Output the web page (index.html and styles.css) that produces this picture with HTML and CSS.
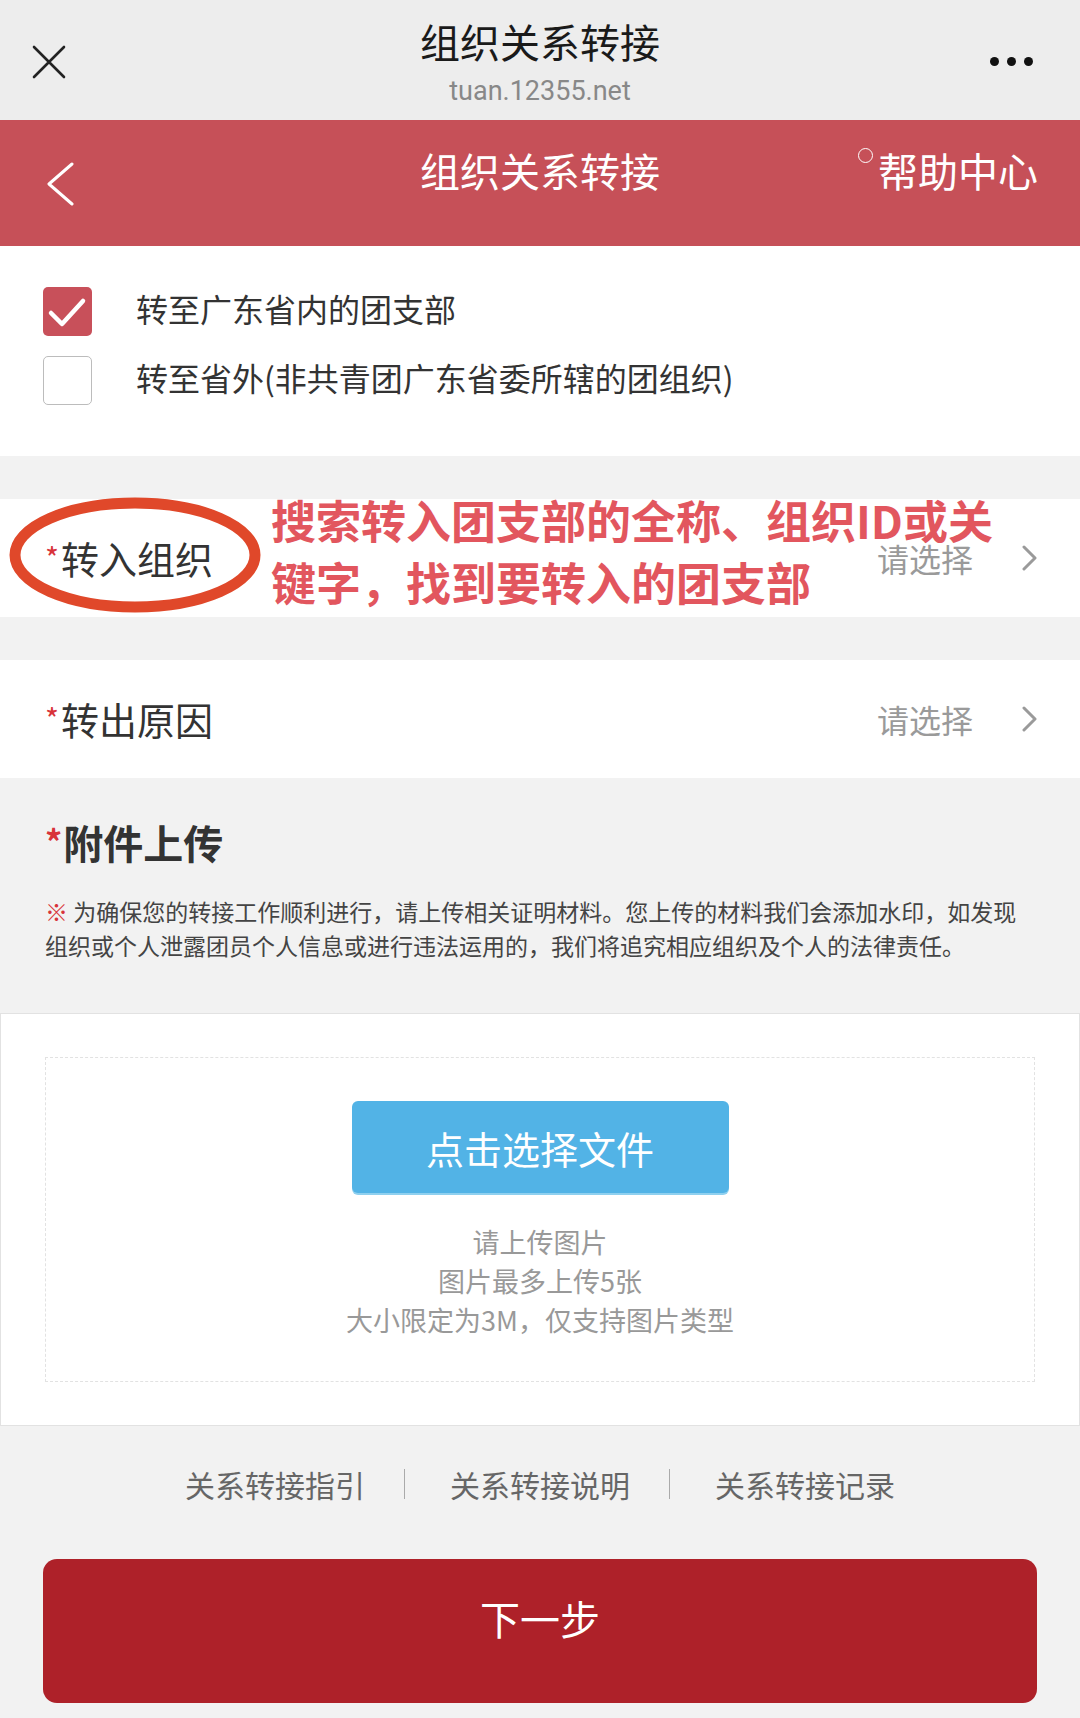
FILE: index.html
```html
<!DOCTYPE html>
<html lang="zh-CN">
<head>
    <meta charset="UTF-8">
    <meta name="viewport" content="width=device-width, initial-scale=1.0">
    <title>组织关系转接</title>
    <link rel="stylesheet" href="styles.css">
</head>
<body>
    <div class="wx-bar">
        <div class="wx-close">
            <svg width="34" height="34" viewBox="0 0 34 34"><path d="M2 2 L32 32 M32 2 L2 32" stroke="#222" stroke-width="2.6" stroke-linecap="round"/></svg>
        </div>
        <div class="wx-title">
            <div class="wx-name">组织关系转接</div>
            <div class="wx-url">tuan.12355.net</div>
        </div>
        <div class="wx-more">
            <span class="dot"></span><span class="dot"></span><span class="dot"></span>
        </div>
    </div>

    <div class="header">
        <div class="back">
            <svg width="28" height="44" viewBox="0 0 28 44"><polyline points="26,2 3,22 26,42" fill="none" stroke="#fff" stroke-width="3" stroke-linecap="round" stroke-linejoin="round"/></svg>
        </div>
        <div class="header-title">组织关系转接</div>
        <div class="help"><span class="help-dot"></span>帮助中心</div>
    </div>

    <div class="options">
        <div class="option">
            <span class="check checked">
                <svg width="49" height="49" viewBox="0 0 49 49"><polyline points="8,26 19,37 40,14" fill="none" stroke="#fff" stroke-width="4.5" stroke-linecap="round" stroke-linejoin="round"/></svg>
            </span>
            <span class="option-text">转至广东省内的团支部</span>
        </div>
        <div class="option">
            <span class="check"></span>
            <span class="option-text">转至省外(非共青团广东省委所辖的团组织)</span>
        </div>
    </div>

    <div class="field field-org">
        <div class="field-label"><span class="req">*</span>转入组织</div>
        <div class="field-value">
            请选择
            <svg width="15" height="26" viewBox="0 0 15 26"><polyline points="2,2 13,13 2,24" fill="none" stroke="#9a9a9a" stroke-width="3" stroke-linecap="round" stroke-linejoin="round"/></svg>
        </div>
        <svg class="mark-ring" width="256" height="118" viewBox="0 0 256 118"><ellipse cx="127" cy="58" rx="120" ry="52" fill="none" stroke="#e0482a" stroke-width="11"/></svg>
        <div class="mark-note">搜索转入团支部的全称、组织ID或关<br>键字，找到要转入的团支部</div>
    </div>

    <div class="field">
        <div class="field-label"><span class="req">*</span>转出原因</div>
        <div class="field-value">
            请选择
            <svg width="15" height="26" viewBox="0 0 15 26"><polyline points="2,2 13,13 2,24" fill="none" stroke="#9a9a9a" stroke-width="3" stroke-linecap="round" stroke-linejoin="round"/></svg>
        </div>
    </div>

    <div class="attach">
        <h2 class="attach-title"><span class="req">*</span>附件上传</h2>
        <p class="attach-note"><span class="note-mark">※</span> 为确保您的转接工作顺利进行，请上传相关证明材料。您上传的材料我们会添加水印，如发现组织或个人泄露团员个人信息或进行违法运用的，我们将追究相应组织及个人的法律责任。</p>
    </div>

    <div class="upload">
        <div class="upload-area">
            <button class="upload-btn">点击选择文件</button>
            <div class="upload-tips">
                <p>请上传图片</p>
                <p>图片最多上传5张</p>
                <p>大小限定为3M，仅支持图片类型</p>
            </div>
        </div>
    </div>

    <div class="links">
        <a href="#">关系转接指引</a>
        <span class="sep"></span>
        <a href="#">关系转接说明</a>
        <span class="sep"></span>
        <a href="#">关系转接记录</a>
    </div>

    <div class="footer">
        <button class="next-btn">下一步</button>
    </div>
</body>
</html>
```

FILE: styles.css
```css
body {
    margin: 0;
    background-color: #f2f2f2;
    font-family: "Noto Sans CJK SC", "Noto Sans", sans-serif;
    color: #333;
}
.wx-bar {
    height: 120px;
    background-color: #ededed;
    display: grid;
    grid-template-columns: 150px 1fr 150px;
}
.wx-close {
    padding-left: 32px;
    padding-top: 45px;
}
.wx-title {
    padding-top: 18px;
    text-align: center;
}
.wx-name {
    font-size: 40px;
    line-height: 46px;
    color: #1a1a1a;
}
.wx-url {
    margin-top: 11px;
    font-family: Roboto, sans-serif;
    font-size: 27px;
    line-height: 32px;
    color: #888;
}
.wx-more {
    display: flex;
    justify-content: flex-end;
    gap: 8px;
    padding-right: 47px;
    padding-top: 57px;
}
.dot {
    width: 9px;
    height: 9px;
    border-radius: 50%;
    background-color: #111;
}
.header {
    height: 126px;
    box-sizing: border-box;
    background-color: #c65058;
    display: grid;
    grid-template-columns: 250px 1fr 250px;
    color: #fff;
}
.back {
    padding-left: 46px;
    padding-top: 42px;
}
.header-title {
    text-align: center;
    font-size: 40px;
    line-height: 48px;
    padding-top: 26px;
}
.help {
    display: flex;
    align-items: flex-start;
    justify-content: flex-end;
    padding-right: 42px;
    padding-top: 26px;
    font-size: 40px;
    line-height: 48px;
    white-space: nowrap;
}
.help-dot {
    width: 13px;
    height: 13px;
    border: 1.6px solid #fff;
    border-radius: 50%;
    margin-top: 2px;
    margin-right: 5px;
}
.options {
    background-color: #fff;
    padding: 41px 0 51px 43px;
    display: flex;
    flex-direction: column;
    gap: 20px;
}
.option {
    display: flex;
    align-items: center;
    gap: 44px;
    height: 49px;
}
.check {
    width: 49px;
    height: 49px;
    box-sizing: border-box;
    border: 1.5px solid #bcbcbc;
    border-radius: 5px;
    flex-shrink: 0;
}
.check.checked {
    border: none;
    background-color: #c8505a;
}
.check svg {
    display: block;
}
.option-text {
    font-size: 32px;
    line-height: 40px;
    padding-bottom: 8px;
    color: #333;
}
.field {
    position: relative;
    margin-top: 43px;
    height: 118px;
    background-color: #fff;
    display: flex;
    align-items: center;
    justify-content: space-between;
    padding: 0 43px 0 45px;
}
.field-label {
    display: flex;
    align-items: flex-start;
    font-size: 38px;
    line-height: 44px;
    color: #333;
}
.req {
    color: #d8333a;
    font-size: 30px;
    line-height: 30px;
    margin-top: 6px;
    margin-right: 2px;
}
.field-value {
    display: flex;
    align-items: center;
    gap: 49px;
    font-size: 32px;
    color: #9a9a9a;
}
.mark-ring {
    position: absolute;
    left: 8px;
    top: -2px;
}
.mark-note {
    position: absolute;
    left: 271px;
    top: -10px;
    font-size: 45px;
    line-height: 62px;
    font-weight: bold;
    color: #e2565e;
    white-space: nowrap;
}
.attach {
    padding: 40px 20px 51px 45px;
}
.attach-title {
    margin: 0;
    display: flex;
    align-items: flex-start;
    font-size: 40px;
    line-height: 48px;
    font-weight: bold;
    color: #333;
}
.attach-title .req {
    font-size: 34px;
    line-height: 34px;
    margin-top: 6px;
    margin-right: 1px;
}
.attach-note {
    margin: 28px 0 0 0;
    max-width: 982px;
    font-size: 23px;
    line-height: 34px;
    color: #444;
}
.note-mark {
    color: #d8333a;
}
.upload {
    background-color: #fff;
    border: 1px solid #e2e2e2;
    padding: 43px 44px;
}
.upload-area {
    border: 1px dashed #e2e2e2;
    padding: 43px 0 42px 0;
    text-align: center;
}
.upload-btn {
    width: 377px;
    height: 92px;
    border: none;
    border-radius: 6px;
    background-color: #52b3e6;
    box-shadow: 0 2px 0 #8fd0ef;
    color: #fff;
    font-family: "Noto Sans CJK SC", sans-serif;
    font-size: 38px;
    cursor: pointer;
}
.upload-tips {
    margin-top: 29px;
}
.upload-tips p {
    margin: 0;
    font-size: 27px;
    line-height: 39px;
    color: #999;
}
.links {
    display: flex;
    justify-content: center;
    align-items: center;
    padding-top: 40px;
}
.links a {
    font-size: 30px;
    line-height: 36px;
    color: #666;
    text-decoration: none;
}
.sep {
    width: 1px;
    height: 30px;
    background-color: #aaa;
    margin: 0 45px 0 39px;
}
.footer {
    padding: 57px 43px 15px 43px;
}
.next-btn {
    width: 100%;
    height: 144px;
    border: none;
    border-radius: 14px;
    background-color: #ae2129;
    color: #fff;
    font-family: "Noto Sans CJK SC", sans-serif;
    font-size: 40px;
    line-height: 48px;
    padding: 0 0 26px 0;
    cursor: pointer;
}
```
